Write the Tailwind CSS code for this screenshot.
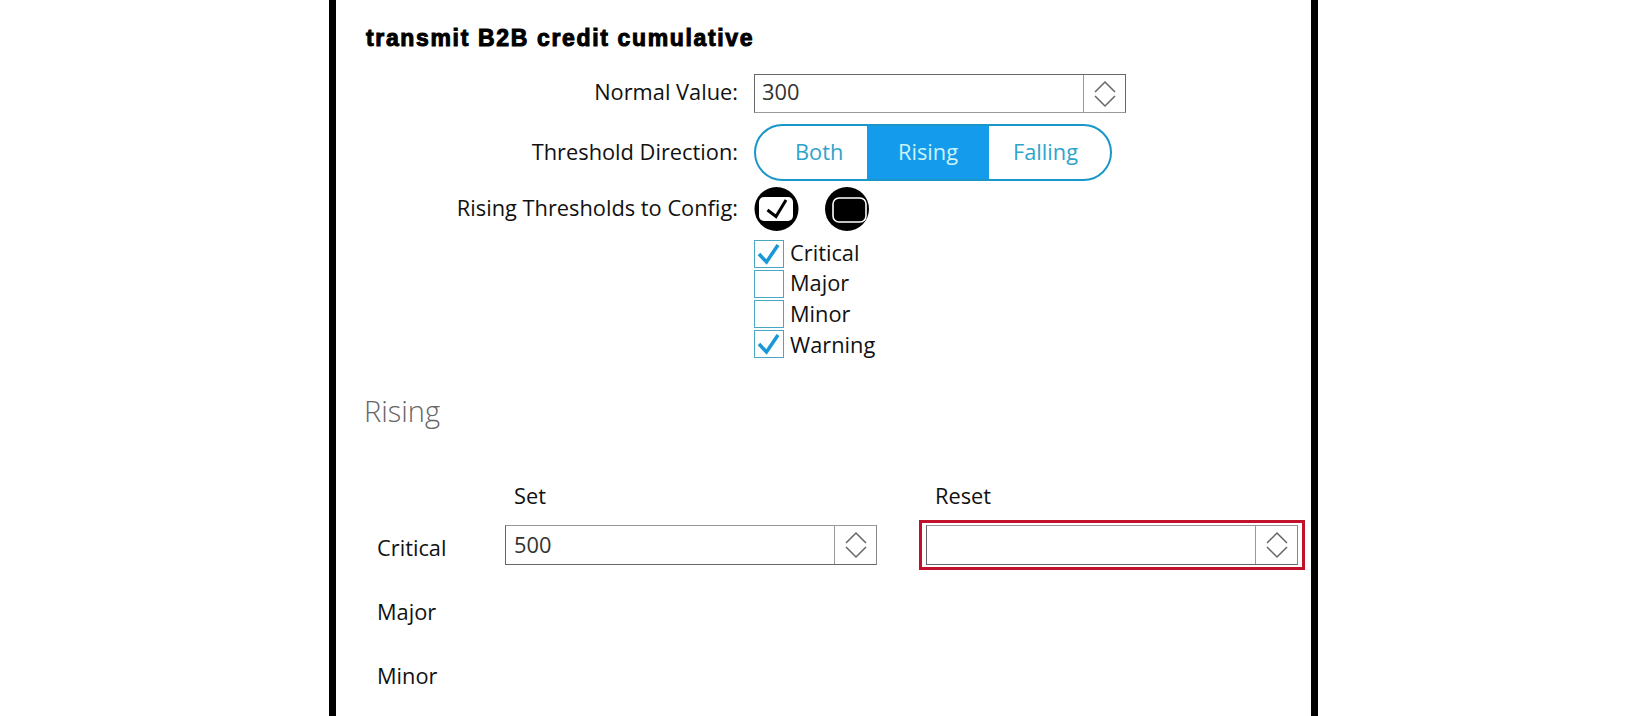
<!DOCTYPE html>
<html>
<head>
<meta charset="utf-8">
<script src="https://cdn.jsdelivr.net/npm/@tailwindcss/browser@4"></script>
</head>
<body class="bg-white">
<div class="h-[716px] overflow-hidden font-['Open_Sans',sans-serif] text-[21.8px] text-[#111]">
  <main class="ml-[329px] w-[989px] h-[716px] border-x-[7px] border-black pl-[30px] pt-[22px] box-border">
    <h1 class="h-[30px] font-['Liberation_Sans',sans-serif] font-bold text-[23px] tracking-[1.65px] leading-[32px] text-black [-webkit-text-stroke:1px_black] whitespace-nowrap">transmit B2B credit cumulative</h1>

    <div class="mt-[22px] grid grid-cols-[372px_1fr] gap-x-[16px]">
      <div class="h-[39px] pb-[4px] flex items-center justify-end leading-none">Normal Value:</div>
      <div class="w-[372px] h-[39px] border border-[#666] border-b-[#999] flex">
        <div class="flex-1 pl-[7px] pb-[3px] flex items-center text-[#333] leading-none">300</div>
        <div class="w-[42px] border-l border-[#999] flex items-center justify-center">
          <svg width="24" height="28" viewBox="0 0 24 28" fill="none" stroke="#666" stroke-width="1.5"><path d="M2 12 12 2 22 12"/><path d="M2 16 12 26 22 16"/></svg>
        </div>
      </div>

      <div class="mt-[11px] pb-[2px] h-[57px] flex items-center justify-end leading-none">Threshold Direction:</div>
      <div class="mt-[11px] w-[358px] h-[57px] rounded-full border-2 border-[#1a97c8] flex overflow-hidden text-[#2ea3cc] leading-none">
        <div class="w-[111px] pl-[39px] pb-[2px] flex items-center">Both</div>
        <div class="w-[122px] bg-[#149beb] text-[#cdf3f7] pb-[2px] flex items-center justify-center">Rising</div>
        <div class="flex-1 pl-[24px] pb-[2px] flex items-center">Falling</div>
      </div>

      <div class="mt-[6px] pb-[2px] h-[43px] flex items-center justify-end leading-none whitespace-nowrap">Rising Thresholds to Config:</div>
      <div class="mt-[6px] h-[44px] flex gap-[25px]">
        <svg width="45" height="44" viewBox="0 0 45 44"><circle cx="22.5" cy="22" r="22" fill="#000"/><rect x="5" y="10" width="34" height="24" rx="5" fill="#fff"/><path d="M13.5 23 22 29.5 32 13" fill="none" stroke="#000" stroke-width="3"/></svg>
        <svg width="46" height="44" viewBox="0 0 46 44"><circle cx="23" cy="22" r="22" fill="#000"/><rect x="9" y="11" width="33" height="24" rx="6" fill="#000" stroke="#fff" stroke-width="1.6"/></svg>
      </div>

      <div></div>
      <div class="mt-[9px] flex flex-col w-fit">
        <div class="h-[30px] flex items-start gap-[6px] leading-[26px]">
          <span class="w-[30px] h-[28px] border border-[#4aa7c4] flex items-center justify-center"><svg width="24" height="22" viewBox="0 0 24 22" fill="none" stroke="#1a97d5" stroke-width="3.5"><path d="M2 11 9.5 19 21 2"/></svg></span>Critical
        </div>
        <div class="h-[30px] flex items-start gap-[6px] leading-[25px]">
          <span class="w-[30px] h-[28px] border border-[#4aa7c4]"></span>Major
        </div>
        <div class="h-[30px] flex items-start gap-[6px] leading-[28px]">
          <span class="w-[30px] h-[28px] border border-[#4aa7c4]"></span>Minor
        </div>
        <div class="h-[30px] flex items-start gap-[6px] leading-[30px]">
          <span class="w-[30px] h-[28px] border border-[#4aa7c4] flex items-center justify-center"><svg width="24" height="22" viewBox="0 0 24 22" fill="none" stroke="#1a97d5" stroke-width="3.5"><path d="M2 11 9.5 19 21 2"/></svg></span>Warning
        </div>
      </div>
    </div>

    <h2 class="mt-[32px] -ml-[2px] h-[40px] font-light text-[29px] leading-[38px] text-[#666]">Rising</h2>

    <div class="mt-[51px] grid grid-cols-[139px_372px_49px_372px] items-center">
      <div></div>
      <div class="pl-[9px] pb-[2px] h-[30px] leading-[26px]">Set</div>
      <div></div>
      <div class="pl-[9px] pb-[2px] h-[30px] leading-[26px]">Reset</div>

      <div class="pl-[11px] mt-[12px] h-[40px] flex items-center leading-none translate-y-[3px]">Critical</div>
      <div class="mt-[12px] h-[40px] border border-[#666] border-t-[#999] border-r-[#888] flex">
        <div class="flex-1 pl-[8px] flex items-center text-[#333] leading-none">500</div>
        <div class="w-[42px] border-l border-[#999] flex items-center justify-center">
          <svg width="24" height="28" viewBox="0 0 24 28" fill="none" stroke="#666" stroke-width="1.5"><path d="M2 12 12 2 22 12"/><path d="M2 16 12 26 22 16"/></svg>
        </div>
      </div>
      <div></div>
      <div class="relative mt-[12px] h-[40px] border border-[#666] border-t-[#999] border-r-[#888] flex">
        <div class="absolute -inset-x-[8px] -inset-y-[6px] border-[3px] border-[#c0122c]"></div>
        <div class="flex-1"></div>
        <div class="w-[42px] border-l border-[#999] flex items-center justify-center">
          <svg width="24" height="28" viewBox="0 0 24 28" fill="none" stroke="#666" stroke-width="1.5"><path d="M2 12 12 2 22 12"/><path d="M2 16 12 26 22 16"/></svg>
        </div>
      </div>

      <div class="pl-[11px] mt-[24px] h-[40px] flex items-center leading-none translate-y-[3px] col-span-4">Major</div>
      <div class="pl-[11px] mt-[24px] h-[40px] flex items-center leading-none translate-y-[3px] col-span-4">Minor</div>
    </div>
  </main>
</div>
</body>
</html>
